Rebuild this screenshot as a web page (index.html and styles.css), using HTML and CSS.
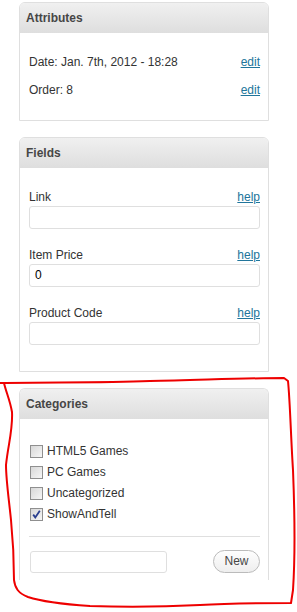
FILE: index.html
```html
<!DOCTYPE html>
<html>
<head>
<meta charset="utf-8">
<link rel="stylesheet" href="styles.css">
</head>
<body>
<div class="column">
  <section class="box">
    <h3 class="box-head">Attributes</h3>
    <div class="box-body attrs">
      <div class="row"><span>Date: Jan. 7th, 2012 - 18:28</span><a href="#">edit</a></div>
      <div class="row"><span>Order: 8</span><a href="#">edit</a></div>
    </div>
  </section>

  <section class="box">
    <h3 class="box-head">Fields</h3>
    <div class="box-body fields">
      <div class="field">
        <div class="row"><span>Link</span><a href="#">help</a></div>
        <div class="input"></div>
      </div>
      <div class="field">
        <div class="row"><span>Item Price</span><a href="#">help</a></div>
        <div class="input">0</div>
      </div>
      <div class="field">
        <div class="row"><span>Product Code</span><a href="#">help</a></div>
        <div class="input"></div>
      </div>
    </div>
  </section>

  <section class="box open">
    <h3 class="box-head">Categories</h3>
    <div class="box-body cats">
      <ul class="cat-list">
        <li><span class="cb"></span>HTML5 Games</li>
        <li><span class="cb"></span>PC Games</li>
        <li><span class="cb"></span>Uncategorized</li>
        <li><span class="cb checked"><svg viewBox="0 0 11 11" width="11" height="11"><path d="M2.2 5.6 L4.3 8.4 L8.8 1.8" fill="none" stroke="#2a3f8f" stroke-width="1.8"/></svg></span>ShowAndTell</li>
      </ul>
      <div class="new-row">
        <div class="input small"></div>
        <span class="btn">New</span>
      </div>
    </div>
  </section>
</div>

<svg class="scribble" width="297" height="612" viewBox="0 0 297 612">
  <path d="M0,383 C50,382 100,383 150,381 C200,380 250,378 284,378 L288,381 C290,400 291,440 293,470 C295,520 295,560 293,590 L291,603 C260,603 230,603 200,605 C160,607 120,607 90,606 C60,604 40,601 28,597 C18,593 15,588 14,580 C14,560 13,540 11,520 C9,500 6,480 6,465 C8,445 13,430 12,412 C10,400 6,392 4,383"
        fill="none" stroke="#ee0000" stroke-width="2" stroke-linejoin="round" stroke-linecap="round"/>
</svg>
</body>
</html>
```

FILE: styles.css
```css
html, body {
  margin: 0;
  padding: 0;
  background: #fff;
}
body {
  font-family: "Liberation Sans", Arial, sans-serif;
  font-size: 12px;
  color: #333;
  width: 297px;
  height: 612px;
  overflow: hidden;
  position: relative;
}
.column {
  padding: 2px 0 0 19px;
  width: 250px;
  display: flex;
  flex-direction: column;
  gap: 16px;
}
.box {
  border: 1px solid #dfdfdf;
  border-radius: 6px 6px 0 0;
  background: #fff;
}
.box.open {
  border-bottom: none;
  height: 191px;
}
.box-head {
  margin: 0;
  height: 30px;
  line-height: 30px;
  padding-left: 6px;
  font-size: 12px;
  font-weight: bold;
  color: #464646;
  background: linear-gradient(#f0f0f0, #dedede);
  border-radius: 5px 5px 0 0;
}
.box-body {
  padding: 21px 8px 0 9px;
}
.row {
  display: flex;
  justify-content: space-between;
  line-height: 16px;
  height: 16px;
}
a {
  color: #21759b;
  text-decoration: underline;
}
.attrs {
  padding-bottom: 22px;
}
.attrs .row + .row {
  margin-top: 12px;
}
.fields {
  padding-bottom: 26px;
}
.field + .field {
  margin-top: 18px;
}
.input {
  margin-top: 1px;
  height: 21px;
  border: 1px solid #dfdfdf;
  border-radius: 3px;
  background: #fff;
  line-height: 21px;
  padding-left: 5px;
  color: #000;
}
.cats {
  padding-top: 22px;
}
.cat-list {
  list-style: none;
  margin: 0;
  padding: 0 0 11px 1px;
  border-bottom: 1px solid #dfdfdf;
}
.cat-list li {
  height: 21px;
  line-height: 21px;
  display: flex;
  align-items: center;
}
.cb {
  box-sizing: border-box;
  width: 13px;
  height: 13px;
  border: 1px solid #8f8f8f;
  background: linear-gradient(135deg, #d8d8d8, #f6f6f6);
  margin-right: 4px;
  display: flex;
  align-items: center;
  justify-content: center;
}
.new-row {
  margin-top: 13px;
  display: flex;
  justify-content: space-between;
  align-items: center;
  padding-left: 1px;
}
.input.small {
  margin-top: 0;
  width: 130px;
  height: 20px;
}
.btn {
  box-sizing: border-box;
  width: 47px;
  height: 23px;
  line-height: 21px;
  border: 1px solid #bbb;
  border-radius: 12px;
  background: linear-gradient(#fefefe, #eeeeee);
  color: #464646;
  text-align: center;
}
.scribble {
  position: absolute;
  left: 0;
  top: 0;
  pointer-events: none;
}
```
